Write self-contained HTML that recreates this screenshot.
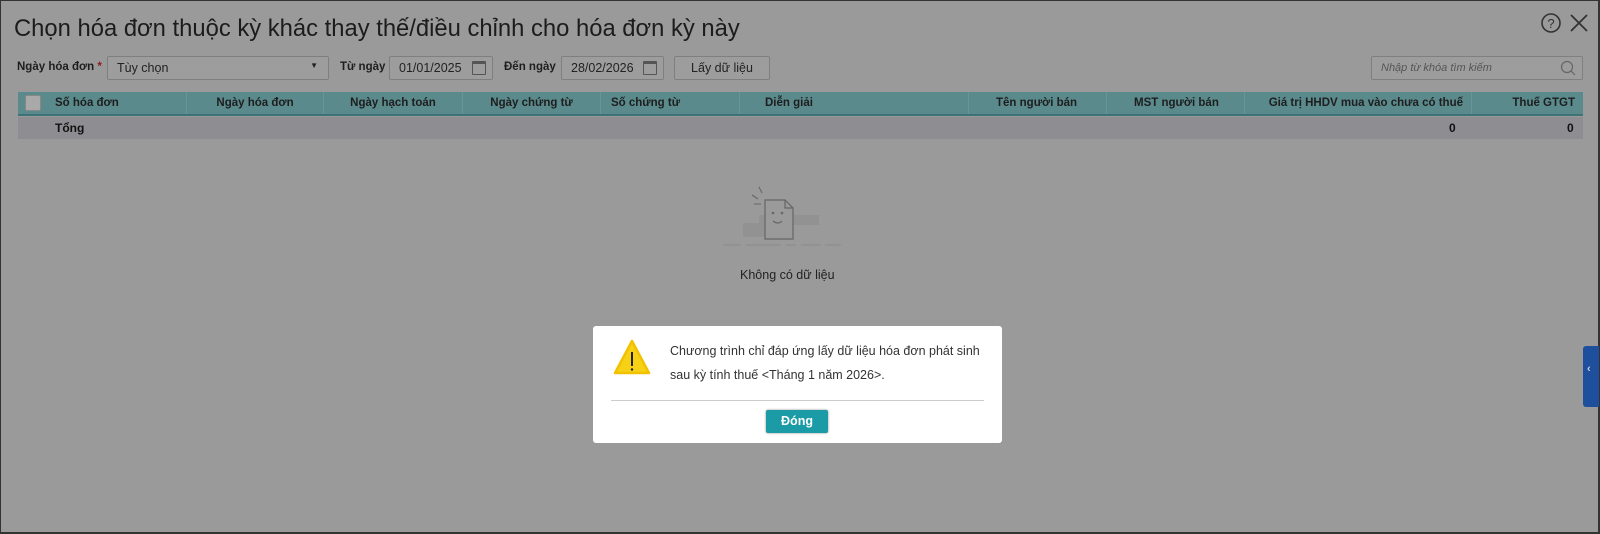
<!DOCTYPE html>
<html><head><meta charset="utf-8"><style>
*{box-sizing:border-box;margin:0;padding:0}
body{width:1600px;height:534px;overflow:hidden;background:#333;font-family:"Liberation Sans",sans-serif;position:relative}
.pg{position:absolute;left:1px;top:1px;width:1597px;height:531px;background:#9a9a9a}
.t{position:absolute;left:13px;top:14px;font-size:23.8px;color:#1c1c1c;white-space:nowrap}
.lbl{position:absolute;font-size:11.5px;font-weight:bold;color:#1e1e1e;top:60px}
.inp{position:absolute;top:55px;height:24px;border:1px solid #7f7f7f;background:#9d9d9d;font-size:12.5px;color:#222;padding:4px 9px;border-radius:2px}
.btn{position:absolute;top:55px;height:24px;border:1px solid #7f7f7f;background:#9d9d9d;font-size:12.5px;color:#222;text-align:center;padding-top:4px;border-radius:2px}
.cal{position:absolute;right:6px;top:4px;width:14px;height:14px;border:1px solid #555;border-top-width:3px;border-radius:1px}
.hd{position:absolute;left:17px;top:91px;width:1565px;height:24px;background:#5a8a8c;border-bottom:2px solid #3d7276}
.hd div{position:absolute;top:0;height:22px;font-size:11.5px;font-weight:bold;color:#1e1e1e;padding-top:5px;border-left:1px solid #6a9597}
.tot{position:absolute;left:17px;top:116px;width:1565px;height:22px;background:#8e8e92;font-size:12px;font-weight:bold;color:#111}
.dlg{position:absolute;left:592px;top:325px;width:409px;height:117px;background:#fff;border-radius:3px}
</style></head><body><div class="pg">
<div class="t">Chọn hóa đơn thuộc kỳ khác thay thế/điều chỉnh cho hóa đơn kỳ này</div>
<svg style="position:absolute;left:1539px;top:11px" width="22" height="22"><circle cx="11" cy="11" r="9" fill="none" stroke="#333" stroke-width="1.6"/><text x="11" y="16" font-size="13" text-anchor="middle" fill="#333" font-family="Liberation Sans">?</text></svg>
<svg style="position:absolute;left:1567px;top:11px" width="22" height="22"><path d="M3 3L19 19M19 3L3 19" stroke="#333" stroke-width="1.8"/></svg>
<div class="lbl" style="left:16px">Ngày hóa đơn <span style="color:#8a1c1c">*</span></div>
<div class="inp" style="left:106px;width:222px">Tùy chọn<span style="position:absolute;right:10px;top:4px;font-size:8px">▼</span></div>
<div class="lbl" style="left:339px">Từ ngày</div>
<div class="inp" style="left:388px;width:104px">01/01/2025<span class="cal"></span></div>
<div class="lbl" style="left:503px">Đến ngày</div>
<div class="inp" style="left:560px;width:103px">28/02/2026<span class="cal"></span></div>
<div class="btn" style="left:673px;width:96px">Lấy dữ liệu</div>
<div class="inp" style="left:1370px;width:212px;font-style:italic;font-size:11px;color:#555;padding-top:5px">Nhập từ khóa tìm kiếm
<svg style="position:absolute;right:6px;top:3px" width="16" height="16"><circle cx="7" cy="7" r="5.5" fill="none" stroke="#666" stroke-width="1.2"/><path d="M11 11L15 15" stroke="#666" stroke-width="1.2"/></svg></div>
<div class="hd">
<span style="position:absolute;left:7px;top:3px;width:16px;height:16px;background:#a9a9a9;border:1px solid #888;border-radius:2px"></span>
<div style="left:37px;border:0">Số hóa đơn</div>
<div style="left:168px;width:137px;text-align:center">Ngày hóa đơn</div>
<div style="left:305px;width:139px;text-align:center">Ngày hạch toán</div>
<div style="left:444px;width:138px;text-align:center">Ngày chứng từ</div>
<div style="left:582px;width:139px;padding-left:10px">Số chứng từ</div>
<div style="left:721px;width:229px;padding-left:25px">Diễn giải</div>
<div style="left:950px;width:138px;padding-left:27px">Tên người bán</div>
<div style="left:1088px;width:138px;padding-left:27px">MST người bán</div>
<div style="left:1226px;width:227px;text-align:right;padding-right:8px">Giá trị HHDV mua vào chưa có thuế</div>
<div style="left:1453px;width:112px;text-align:right;padding-right:8px">Thuế GTGT</div>
</div>
<div class="tot"><span style="position:absolute;left:37px;top:4px">Tổng</span><span style="position:absolute;left:1431px;top:4px">0</span><span style="position:absolute;left:1549px;top:4px">0</span></div>
<svg style="position:absolute;left:720px;top:182px" width="130" height="70">
<rect x="38" y="32" width="60" height="10" fill="#929292"/><rect x="22" y="40" width="40" height="14" fill="#929292"/>
<path d="M44 17H64L72 25V56H44Z M64 17V25H72" fill="#9a9a9a" stroke="#666" stroke-width="1.2"/>
<circle cx="52" cy="30" r="1.3" fill="#666"/><circle cx="61" cy="30" r="1.3" fill="#666"/><path d="M52 38Q57 42 61 38" fill="none" stroke="#666" stroke-width="1.2"/>
<path d="M31 12L37 16M33 21H40M38 4L41 10" stroke="#666" stroke-width="1.1"/>
<path d="M2 62H20M25 62H60M65 62H75M80 62H100M104 62H120" stroke="#8a8a8a" stroke-width="1"/></svg>
<div style="position:absolute;left:739px;top:267px;font-size:12.5px;color:#222">Không có dữ liệu</div>
<div class="dlg">
<svg style="position:absolute;left:20px;top:13px" width="38" height="38"><path d="M19 2L36 34H2Z" fill="#f7d115" stroke="#f2c200" stroke-linejoin="round" stroke-width="2.5"/><path d="M19 13V27" stroke="#222" stroke-width="2"/><circle cx="19" cy="30.5" r="1.2" fill="#222"/></svg>
<div style="position:absolute;left:77px;top:13px;font-size:12.5px;line-height:24px;color:#333">Chương trình chỉ đáp ứng lấy dữ liệu hóa đơn phát sinh<br>sau kỳ tính thuế &lt;Tháng 1 năm 2026&gt;.</div>
<div style="position:absolute;left:18px;right:18px;top:74px;border-top:1px solid #ccc"></div>
<div style="position:absolute;left:173px;top:84px;width:62px;height:23px;background:#1a9ba5;color:#fff;font-weight:bold;font-size:12.5px;text-align:center;padding-top:4px;border-radius:2px;box-shadow:0 0 2px #888">Đóng</div>
</div>
<div style="position:absolute;left:1582px;top:345px;width:16px;height:61px;background:#1e4f9c;border-radius:3px 0 0 3px;color:#ccd;font-size:11px;padding:17px 0 0 4px;font-weight:bold">‹</div>
</div></body></html>
